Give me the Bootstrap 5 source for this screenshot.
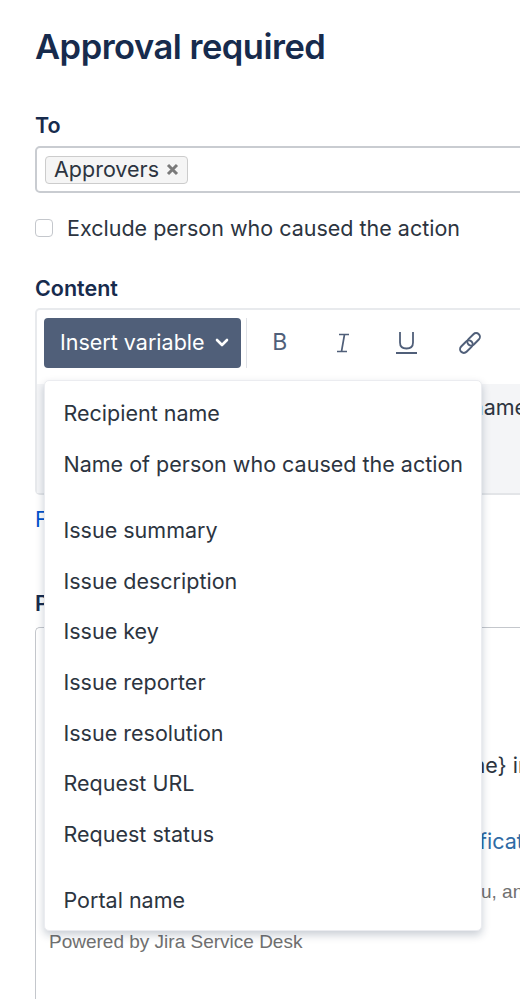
<!DOCTYPE html>
<html lang="en">
<head>
<meta charset="utf-8">
<title>Approval required</title>
<link href="https://cdn.jsdelivr.net/npm/bootstrap@5.3.0/dist/css/bootstrap.min.css" rel="stylesheet">
<style>
html,body{height:999px;overflow:hidden;background:#fff;}
body{font-family:Inter,"Liberation Sans",sans-serif;color:#2c3440;font-size:21.5px;}
.page-clip{width:520px;height:999px;overflow:hidden;}
.page-inner{width:760px;padding:28px 0 0 35px;}
.page-title{font-size:34.5px;font-weight:600;color:#172b4d;line-height:38px;letter-spacing:-.5px;margin:0 0 46px;}
.field-label{display:block;font-size:21.5px;font-weight:600;color:#172b4d;line-height:26px;margin:0 0 8px;}
.to-box{height:47px;border:2px solid #c9ccd1;border-radius:5px;padding:7px 8px;display:flex;align-items:center;}
.tag-chip{height:28px;width:143px;border:1px solid #ccc;background:#f5f5f5;border-radius:4px;display:flex;align-items:center;padding-left:8px;gap:7px;line-height:1;}
.exclude-row{display:flex;align-items:center;gap:14px;margin:24px 0 36px;height:22px;}
.exclude-row .form-check-input{width:18px;height:18px;margin:0;border-color:#c4c7cc;border-radius:4px;flex:none;}
.exclude-row label{line-height:22px;}
.editor-box{height:187px;border:2px solid #e8eaed;border-bottom-color:#e3e5e8;border-radius:5px;position:relative;margin-top:-1px;}
.toolbar{display:flex;align-items:center;height:74px;padding:7px 0 16px 7px;}
.insert-btn{width:197px;height:50px;background:#505f79;border:0;color:#fff;font-size:21.5px;border-radius:4px;padding:0 0 0 16px;display:flex;align-items:center;gap:10px;}
.insert-btn:hover{background:#505f79;color:#fff;}
.tool-sep{width:1px;height:50px;background:#dfe1e6;margin:0 1px 0 5px;}
.tool-btn{width:63.5px;height:36px;display:flex;align-items:center;justify-content:center;color:#505f79;font-size:23px;line-height:1;background:none;border:0;padding:0;}
.edit-area{background:#f4f5f7;height:109px;padding:7px 0 0 14px;white-space:nowrap;color:#2c3440;}
.var-menu{display:block;position:absolute;left:7px;top:70px;width:438px;height:551px;padding:7px 0;margin:0;border:1px solid #ebecf0;border-radius:5px;box-shadow:0 4px 8px rgba(9,30,66,.22);background:#fff;z-index:5;}
.var-menu .dropdown-item{font-size:21.5px;line-height:26px;height:50.6px;padding:12px 18.5px;color:#2c3440;white-space:nowrap;}
.var-sep{height:16px;}
.fmt-link{display:block;color:#0052cc;text-decoration:none;line-height:26px;margin:11px 0 0;}
.preview-label{margin:58px 0 11px;}
.preview-box{height:500px;border:1px solid #c4c7cc;border-right:0;border-bottom:0;border-radius:5px 0 0 0;padding:0 0 0 13px;white-space:nowrap;}
.pv-line{line-height:26px;}
.pv-a{padding-top:124px;padding-left:18px;}
.pv-b{margin-top:50px;padding-left:28px;color:#2f6ba5;}
.pv-c{margin-top:26px;padding-left:6px;color:#707070;font:19px/24px "Liberation Sans",sans-serif;}
.pv-d{margin-top:26px;color:#707070;font:19px/24px "Liberation Sans",sans-serif;}
</style>
</head>
<body>
<div class="page-clip"><div class="page-inner">
  <h1 class="page-title">Approval required</h1>
  <label class="field-label">To</label>
  <div class="to-box">
    <span class="tag-chip">Approvers
      <svg width="13" height="13" viewBox="0 0 13 13"><path d="M2 2l9 9M11 2l-9 9" stroke="#7a7a7a" stroke-width="3" fill="none"/></svg>
    </span>
  </div>
  <div class="exclude-row">
    <input class="form-check-input" type="checkbox" id="ex">
    <label for="ex">Exclude person who caused the action</label>
  </div>
  <label class="field-label">Content</label>
  <div class="editor-box">
    <div class="toolbar">
      <button class="btn insert-btn" type="button">Insert variable
        <svg width="14" height="10" viewBox="0 0 14 10"><path d="M2 2l5 5 5-5" stroke="#fff" stroke-width="2.6" fill="none" stroke-linecap="round" stroke-linejoin="round"/></svg>
      </button>
      <span class="tool-sep"></span>
      <button class="tool-btn" type="button">B</button>
      <button class="tool-btn" type="button"><svg width="14" height="20" viewBox="0 0 14 20"><path d="M3 1.500h10M1 18.500h10M8.500 1.500L5.500 18.500" stroke="#505f79" stroke-width="1.700" fill="none"/></svg></button>
      <button class="tool-btn" type="button"><svg width="21" height="23" viewBox="0 0 21 23"><path d="M4 1v10.500c0 4 2.500 6 6.500 6s6.500-2 6.500-6V1M0 22h21" stroke="#505f79" stroke-width="1.800" fill="none"/></svg></button>
      <button class="tool-btn" type="button"><svg width="26" height="26" viewBox="0 0 24 24" fill="none" stroke="#505f79" stroke-width="1.800"><g transform="rotate(-45 12 12)"><rect x="0.500" y="8.500" width="13.500" height="7" rx="3.500"/><rect x="10" y="8.500" width="13.500" height="7" rx="3.500"/></g></svg></button>
    </div>
    <div class="edit-area">Your approval is now needed by ${Portal name}</div>
    <ul class="dropdown-menu var-menu">
      <li><a class="dropdown-item" href="#">Recipient name</a></li>
      <li><a class="dropdown-item" href="#">Name of person who caused the action</a></li>
      <li class="var-sep"></li>
      <li><a class="dropdown-item" href="#">Issue summary</a></li>
      <li><a class="dropdown-item" href="#">Issue description</a></li>
      <li><a class="dropdown-item" href="#">Issue key</a></li>
      <li><a class="dropdown-item" href="#">Issue reporter</a></li>
      <li><a class="dropdown-item" href="#">Issue resolution</a></li>
      <li><a class="dropdown-item" href="#">Request URL</a></li>
      <li><a class="dropdown-item" href="#">Request status</a></li>
      <li class="var-sep"></li>
      <li><a class="dropdown-item" href="#">Portal name</a></li>
    </ul>
  </div>
  <a class="fmt-link" href="#">Formatting help</a>
  <label class="field-label preview-label">Preview</label>
  <div class="preview-box">
    <div class="pv-line pv-a">Your approval is needed for ${Portal name} in this request</div>
    <div class="pv-line pv-b">View this request and manage your notification</div>
    <div class="pv-line pv-c">You are receiving this mail because of a task by you, and others</div>
    <div class="pv-line pv-d">Powered by Jira Service Desk</div>
  </div>
</div></div>
<script src="https://cdn.jsdelivr.net/npm/bootstrap@5.3.0/dist/js/bootstrap.bundle.min.js"></script>
</body>
</html>
